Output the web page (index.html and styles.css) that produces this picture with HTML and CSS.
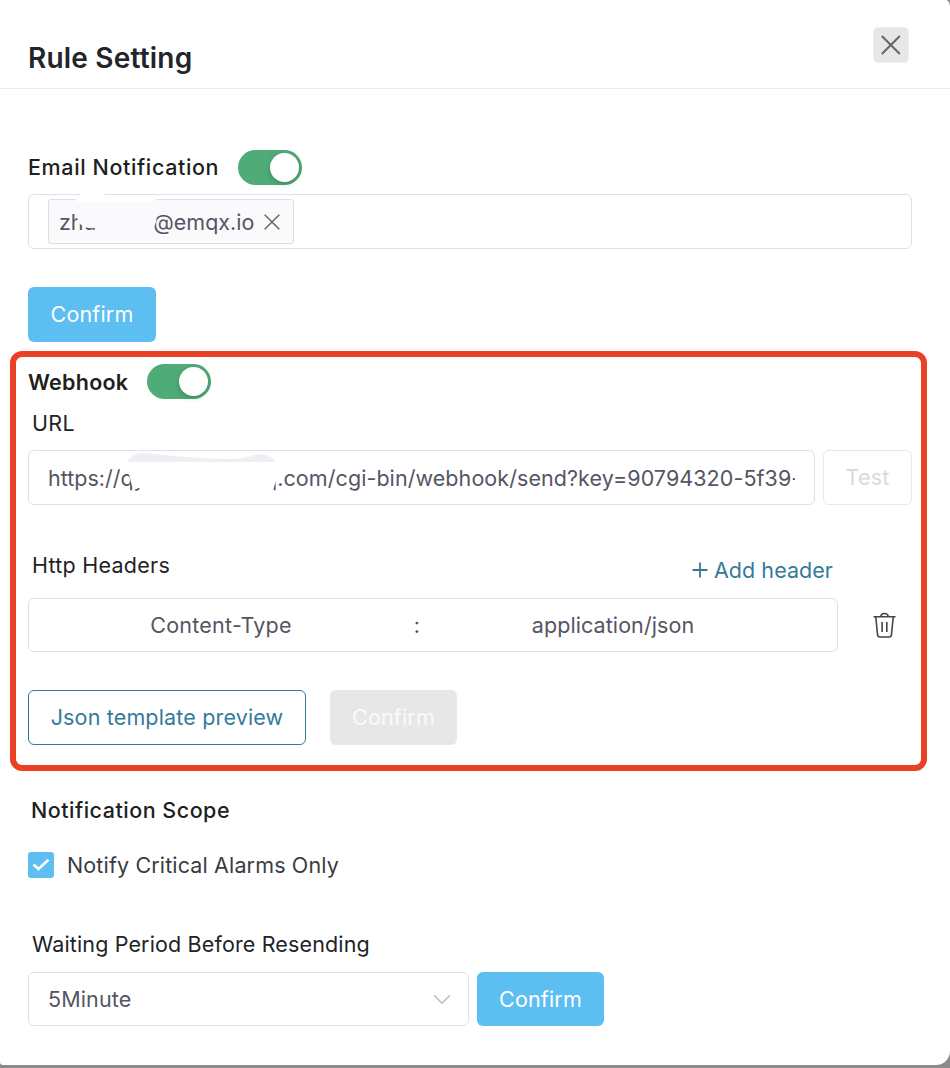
FILE: index.html
```html
<!DOCTYPE html>
<html lang="en">
<head>
<meta charset="utf-8">
<title>Rule Setting</title>
<link rel="stylesheet" href="styles.css">
</head>
<body>
<main class="dialog">
  <header class="dialog-header">
    <h1 class="title">Rule Setting</h1>
    <button class="close" aria-label="Close">
      <svg width="20" height="20" viewBox="0 0 20 20"><path d="M.8 1 18.800 19M18.800 1 .8 19"/></svg>
    </button>
  </header>

  <section class="email">
    <div class="switch-row">
      <h2 class="heading t-email">Email Notification</h2>
      <span class="switch"></span>
    </div>
    <div class="field tags">
      <span class="tag">
        <span class="tag-user">zhu</span><span class="tag-domain">@emqx.io</span>
        <svg class="tag-x" width="16" height="16" viewBox="0 0 16 16"><path d="M.7.7 15.3 15.3M15.3.7.7 15.3"/></svg>
      </span>
      <svg class="smudge" width="884" height="55" viewBox="0 0 884 55">
        <path fill="#fafafc" d="M47 9V20L52 30 57 33.500 66 34H126Q129 27 129 20V9Z"/>
        <path fill="#fff" d="M48 8V4L53 0H76L80 4H123L128 5Q127 8 121 8Z"/>
      </svg>
    </div>
    <button class="btn primary email-confirm">Confirm</button>
  </section>

  <section class="webhook">
    <div class="switch-row">
      <h2 class="heading t-webhook">Webhook</h2>
      <span class="switch"></span>
    </div>
    <p class="label url-label">URL</p>
    <div class="url-row">
      <div class="field url">
        <div class="url-text"><span class="url-head">https://qy</span><span class="url-tail">q.com/cgi-bin/webhook/send?key=90794320-5f39-</span></div>
        <svg class="smudge" width="300" height="55" viewBox="0 0 300 55">
          <path fill="#fff" d="M96 11H249V28L244 43H114L112 38.500 104 36 101 24Z"/>
          <path fill="#efeff3" d="M99 12Q105 2 117 3C145 6 165 8 195 9S225 2 238 5Q245 7 247 11V12Z"/>
        </svg>
      </div>
      <button class="btn ghost">Test</button>
    </div>
    <div class="headers-title">
      <p class="label t-headers">Http Headers</p>
      <a class="add"><svg width="16" height="16" viewBox="0 0 16 16"><path d="M8 .5V15.500M.5 8H15.500"/></svg><span class="t-add">Add header</span></a>
    </div>
    <div class="header-row">
      <div class="field pair"><span class="key">Content-Type</span><span class="colon">:</span><span class="value">application/json</span></div>
      <svg class="trash" width="24" height="27" viewBox="0 0 24 27"><path d="M.5 4.700H22.500M2.800 5 4.500 22.500Q4.700 25 7 25H16Q18.300 25 18.500 22.500L20.200 5M7.800 4.500Q8 1.500 11.500 1.500T15.200 4.500M9.100 10V20M13.800 10V20"/></svg>
    </div>
    <div class="actions">
      <button class="btn outline">Json template preview</button>
      <button class="btn disabled">Confirm</button>
    </div>
  </section>

  <section class="scope">
    <h2 class="heading t-scope">Notification Scope</h2>
    <label class="check-row">
      <span class="checkbox"><svg width="18" height="14" viewBox="0 0 18 14"><path d="M1.500 6.500 6.500 11 16.500 1.800"/></svg></span>
      <span class="t-notify">Notify Critical Alarms Only</span>
    </label>
    <p class="label t-wait">Waiting Period Before Resending</p>
    <div class="wait-row">
      <div class="field select"><span>5Minute</span><svg width="18" height="11" viewBox="0 0 18 11"><path d="M1 1.200 9 9.200 17 1.200"/></svg></div>
      <button class="btn primary">Confirm</button>
    </div>
  </section>
</main>
</body>
</html>
```
FILE: styles.css
```css
* { box-sizing: border-box; }
body { margin: 0; height: 1068px; overflow: hidden; background: #8b8b8b; font-family: Inter, "Liberation Sans", sans-serif; font-size: 21.5px; line-height: 30px; letter-spacing: .14px; color: #222326; }
h1, h2, p { margin: 0; }
span, h2, p, button { white-space: nowrap; }
svg { display: block; flex: none; fill: none; }
.dialog { height: 1065px; background: #fff; border-radius: 0 4px 14px 3px / 0 7px 14px 3px; overflow: hidden; }
.dialog-header { display: flex; justify-content: space-between; align-items: flex-start; height: 89px; padding: 27px 41px 0 28px; border-bottom: 1px solid #ebebf2; }
.title { padding-top: 11px; font-size: 28px; line-height: 40px; font-weight: 600; letter-spacing: .2px; color: #222529; }
.close { display: grid; place-items: center; width: 36px; height: 36px; padding: 0; border: 1px solid #efefef; border-radius: 5px; background: #e7e7e7; }
.close path { stroke: #666; stroke-width: 2; }

.heading { font-size: 21.5px; line-height: 35px; font-weight: 500; color: #1e1f21; }
.switch-row { display: flex; align-items: center; height: 35px; }
.switch { display: flex; justify-content: flex-end; align-items: center; width: 64px; height: 35px; padding-right: 3px; border-radius: 18px; background: #4fac78; }
.switch::after { content: ""; width: 29px; height: 29px; border-radius: 50%; background: #fff; box-shadow: 0 2px 5px #00231040; }
.field { position: relative; border: 1px solid #dfdfe9; border-radius: 6px; background: #fff; color: #555563; }
.btn { height: 55px; padding: 0 0 2px; border: 0; border-radius: 6px; font: 400 21.5px/30px Inter, "Liberation Sans", sans-serif; letter-spacing: .16px; text-align: center; }
.primary { width: 128px; background: #5dbef1; color: #fff; }
.smudge { position: absolute; top: -1px; left: -1px; }

.email { padding: 61px 38px 0 28px; }
.t-email { width: 210px; letter-spacing: .62px; }
.tags { display: flex; height: 55px; margin-top: 9px; padding: 4px 19px; }
.tag { display: flex; align-items: center; width: 246px; height: 45px; padding-left: 10px; border: 1px solid #dfdfe9; border-radius: 3px; background: #fafafc; letter-spacing: 0; }
.tag-user { width: 94px; }
.tag-domain { width: 111px; }
.tag-x path { stroke: #666; stroke-width: 1.5; }
.email-confirm { display: block; margin-top: 38px; }

.webhook { width: 917px; height: 420px; margin: 9px 0 0 10px; padding: 7px 9px 0 12px; border: 6px solid #ea4126; border-radius: 12px; }
.t-webhook { width: 119px; padding-top: 2px; font-weight: 600; letter-spacing: .25px; }
.label { padding-left: 4px; }
.url-label { margin-top: 9px; letter-spacing: .3px; }
.url-row { display: flex; gap: 8px; margin-top: 12px; }
.url { width: 787px; flex: none; height: 55px; padding: 0 19px; }
.url-text { display: flex; overflow: hidden; height: 53px; line-height: 54px; letter-spacing: 0; }
.url-head { width: 216px; flex: none; }
.url-tail { letter-spacing: .07px; }
.ghost { width: 89px; flex: none; border: 1px solid #e7e7ea; background: #fff; color: #d9d9d9; }
.headers-title { display: flex; justify-content: space-between; padding-right: 79px; margin-top: 45px; height: 37px; }
.t-headers { letter-spacing: .25px; }
.add { display: flex; align-items: center; gap: 6px; height: 39px; color: #347a9b; letter-spacing: .05px; }
.add path { stroke: #347a9b; stroke-width: 1.8; }
.header-row { display: flex; align-items: center; margin-top: 11px; }
.pair { display: flex; align-items: center; width: 810px; height: 54px; }
.key { width: 384px; text-align: center; letter-spacing: .25px; }
.colon { width: 8px; text-align: center; }
.value { width: 384px; text-align: center; letter-spacing: .08px; }
.trash { margin-left: 35px; }
.trash path { stroke: #444449; stroke-width: 1.6; }
.actions { display: flex; gap: 24px; margin-top: 38px; }
.outline { width: 278px; border: 1px solid #347a9b; background: #fff; color: #347a9b; }
.disabled { width: 127px; background: #e7e7e7; color: #fafafa; }

.scope { padding: 22px 28px 0; }
.t-scope { padding-left: 3px; letter-spacing: .5px; }
.check-row { display: flex; align-items: center; gap: 13px; margin-top: 22px; height: 30px; color: #3b3c40; margin-bottom: 49px; }
.checkbox { display: grid; place-items: center; width: 26px; height: 26px; border-radius: 3px; background: #5dbef1; }
.checkbox path { stroke: #fff; stroke-width: 2.6; }
.wait-row { display: flex; gap: 8px; margin-top: 13px; }
.select { display: flex; justify-content: space-between; align-items: center; width: 441px; height: 54px; padding: 0 17px 0 19px; }
.select path { stroke: #bdbdbf; stroke-width: 1.6; }
.wait-row .btn { width: 127px; height: 54px; padding-bottom: 0; }
```
